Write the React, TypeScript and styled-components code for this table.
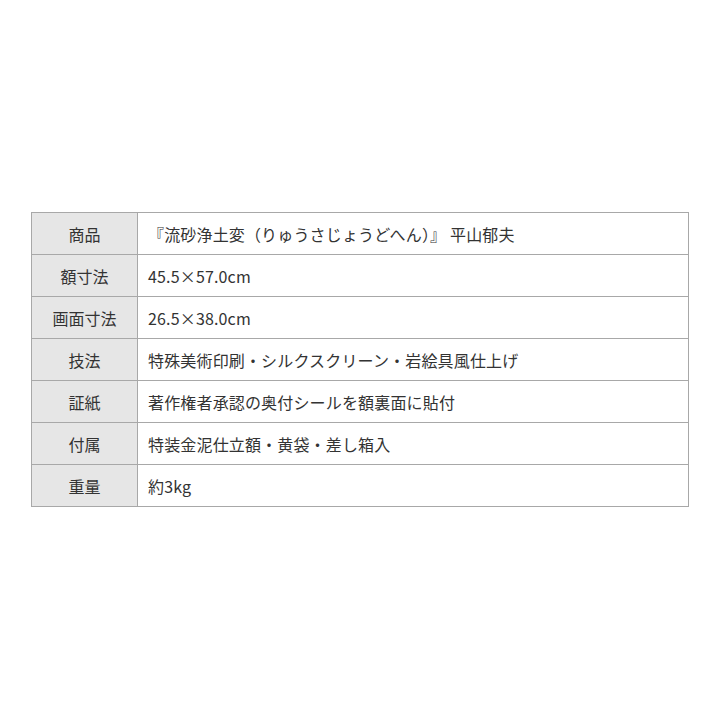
import React, { FC } from 'react';
import styled, { createGlobalStyle } from 'styled-components';

const GlobalStyle = createGlobalStyle`
  html, body {
    margin: 0;
    padding: 0;
    background: #ffffff;
  }
  body {
    font-family: "Noto Sans CJK JP", "Noto Sans", sans-serif;
    color: #333333;
  }
`;

const Page = styled.div`
  width: 720px;
  height: 720px;
  display: flex;
  align-items: center;
  justify-content: center;
  padding-bottom: 1px;
  box-sizing: border-box;
`;

const SpecTable = styled.table`
  width: 658px;
  border-collapse: collapse;
  border: 1px solid #a8a8a8;
  font-size: 16px;
  line-height: 1;
`;

const Row = styled.tr`
  height: 42px;
`;

const Label = styled.th`
  width: 105px;
  background-color: #e6e6e6;
  border: 1px solid #a8a8a8;
  font-weight: 400;
  text-align: center;
  padding: 0;
  color: #333333;
`;

const Value = styled.td`
  border: 1px solid #a8a8a8;
  padding: 0 0 0 10px;
  text-align: left;
  color: #333333;
  letter-spacing: 0.01em;
`;

interface ISpec {
  label: string;
  value: string;
}

const specs: ISpec[] = [
  { label: '商品', value: '『流砂浄土変（りゅうさじょうどへん）』 平山郁夫' },
  { label: '額寸法', value: '45.5×57.0cm' },
  { label: '画面寸法', value: '26.5×38.0cm' },
  { label: '技法', value: '特殊美術印刷・シルクスクリーン・岩絵具風仕上げ' },
  { label: '証紙', value: '著作権者承認の奥付シールを額裏面に貼付' },
  { label: '付属', value: '特装金泥仕立額・黄袋・差し箱入' },
  { label: '重量', value: '約3kg' },
];

const App: FC = () => {
  return (
    <>
      <GlobalStyle />
      <Page>
        <SpecTable>
          <tbody>
            {specs.map((spec) => (
              <Row key={spec.label}>
                <Label>{spec.label}</Label>
                <Value>{spec.value}</Value>
              </Row>
            ))}
          </tbody>
        </SpecTable>
      </Page>
    </>
  );
};

export default App;
